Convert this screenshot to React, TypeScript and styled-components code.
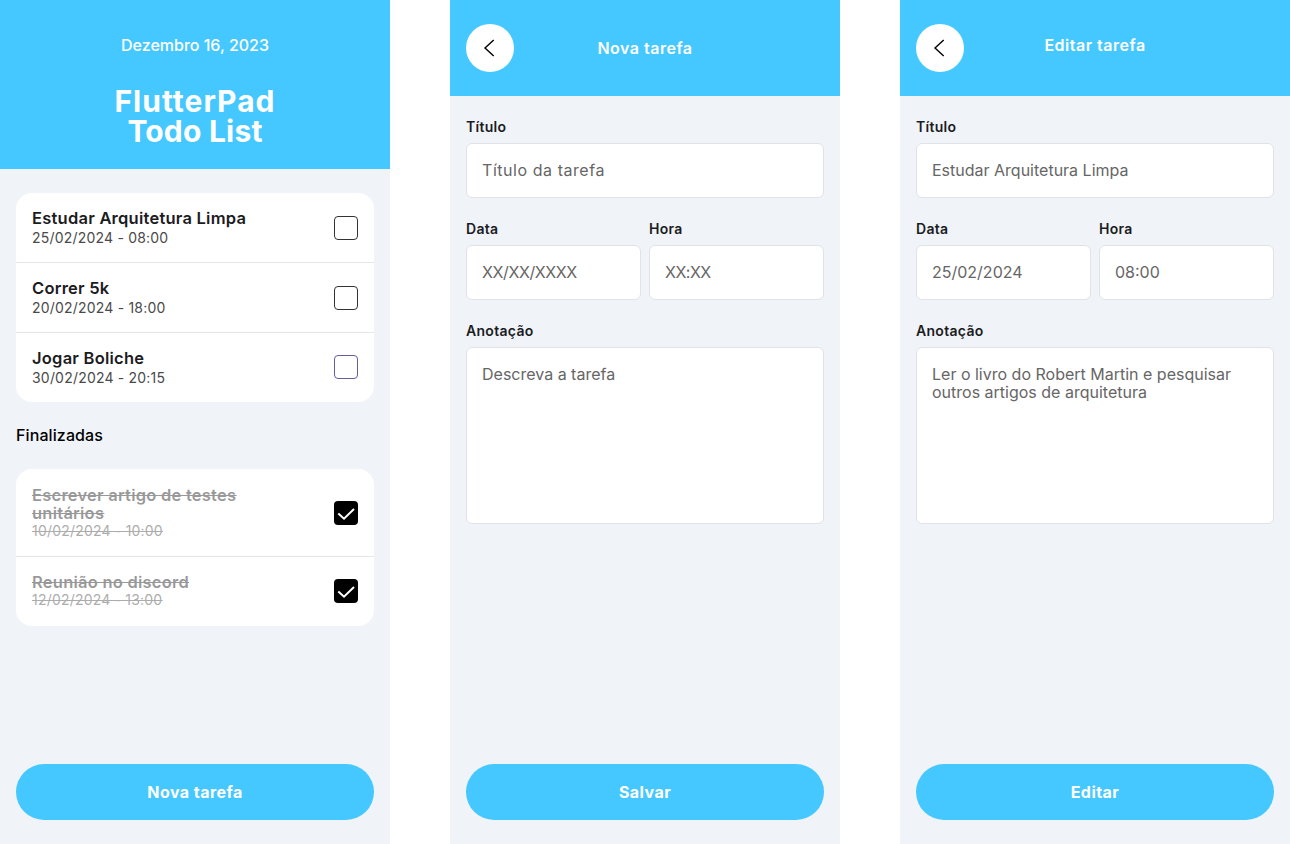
import React from 'react';
import styled, { createGlobalStyle } from 'styled-components';

const GlobalStyle = createGlobalStyle`
    html, body {
        margin: 0;
        padding: 0;
        background: #ffffff;
        font-family: "Inter", "Liberation Sans", sans-serif;
    }
    * {
        box-sizing: border-box;
    }
`;

const Page = styled.div`
    display: flex;
    gap: 60px;
    width: 1290px;
    height: 844px;
    overflow: hidden;
`;

const Screen = styled.div`
    display: flex;
    flex-direction: column;
    width: 390px;
    height: 844px;
    background: #f0f4f9;
    padding-bottom: 24px;
`;

const HomeHeader = styled.header`
    display: flex;
    flex-direction: column;
    align-items: center;
    height: 169px;
    padding-top: 36px;
    background: #45c8ff;
    color: #ffffff;
`;

const DateText = styled.div`
    font-size: 16px;
    line-height: 18px;
    font-weight: 500;
`;

const AppTitle = styled.h1`
    margin: 32px 0 0;
    font-size: 30px;
    line-height: 30px;
    font-weight: 700;
    text-align: center;
`;

const TitleLine = styled.span<{ $spacing: string }>`
    display: block;
    height: 30px;
    letter-spacing: ${(p) => p.$spacing};
`;

const FormHeader = styled.header`
    position: relative;
    display: flex;
    align-items: center;
    justify-content: center;
    height: 96px;
    background: #45c8ff;
`;

const BackButton = styled.button`
    position: absolute;
    left: 16px;
    top: 24px;
    display: flex;
    align-items: center;
    justify-content: center;
    width: 48px;
    height: 48px;
    padding: 0;
    border: none;
    border-radius: 50%;
    background: #ffffff;
`;

const HeaderTitle = styled.h2<{ $raise?: boolean }>`
    margin: ${(p) => (p.$raise ? '0 0 6px' : '0')};
    font-size: 16px;
    line-height: 20px;
    font-weight: 600;
    letter-spacing: 0.5px;
    color: #ffffff;
`;

const Content = styled.div`
    display: flex;
    flex-direction: column;
    flex: 1;
    padding: 24px 16px 0;
`;

const Card = styled.div`
    display: flex;
    flex-direction: column;
    background: #ffffff;
    border-radius: 16px;
`;

const Row = styled.div<{ $tall?: boolean }>`
    display: flex;
    align-items: center;
    justify-content: space-between;
    height: ${(p) => (p.$tall ? '88px' : '70px')};
    padding: 0 16px;
    border-bottom: 1px solid #e6e6ef;

    &:last-child {
        height: 69px;
        padding-bottom: 1px;
        border-bottom: none;
    }
`;

const RowText = styled.div<{ $done?: boolean }>`
    display: flex;
    flex-direction: column;
    gap: ${(p) => (p.$done ? '0' : '2px')};
    width: 240px;
    padding-top: ${(p) => (p.$done ? '0' : '1px')};
    text-decoration: ${(p) => (p.$done ? 'line-through' : 'none')};
    opacity: ${(p) => (p.$done ? 0.45 : 1)};
`;

const RowTitle = styled.div`
    font-size: 16.5px;
    line-height: 18px;
    font-weight: 600;
    letter-spacing: 0.24px;
    color: #1c1c1e;
    text-decoration: inherit;
`;

const RowDate = styled.div`
    font-size: 14px;
    line-height: 18px;
    font-weight: 400;
    letter-spacing: 0.2px;
    color: #4a4a4a;
    text-decoration: inherit;
`;

const Box = styled.div<{ $checked?: boolean; $tint?: string }>`
    display: flex;
    align-items: center;
    justify-content: center;
    width: 24px;
    height: 24px;
    border-radius: 4px;
    border: ${(p) => (p.$checked ? 'none' : `1px solid ${p.$tint || '#333333'}`)};
    background: ${(p) => (p.$checked ? '#000000' : '#ffffff')};
`;

const SectionTitle = styled.h3`
    margin: 24px 0 25px;
    font-size: 16px;
    line-height: 18px;
    font-weight: 500;
    letter-spacing: 0.1px;
    color: #000000;
`;

const BigButton = styled.button`
    width: 358px;
    height: 56px;
    margin: auto 16px 0;
    border: none;
    border-radius: 28px;
    background: #45c8ff;
    color: #ffffff;
    font-family: inherit;
    font-size: 16px;
    font-weight: 700;
    letter-spacing: 0.45px;
`;

const Form = styled.div`
    display: flex;
    flex-direction: column;
    gap: 22px;
    padding: 22px 16px 0;
`;

const Field = styled.label`
    display: flex;
    flex-direction: column;
    flex: 1;
    min-width: 0;
    gap: 7px;
`;

const FieldLabel = styled.span`
    font-size: 14px;
    line-height: 18px;
    font-weight: 600;
    letter-spacing: 0.3px;
    color: #1c1c1e;
`;

const TwoCols = styled.div`
    display: flex;
    gap: 8px;
`;

const TextInput = styled.input<{ $hintSpacing?: string }>`
    width: 100%;
    height: 55px;
    padding: 0 15px 2px;
    border: 1px solid #e0e2e6;
    border-radius: 6px;
    background: #ffffff;
    font-family: inherit;
    font-size: 16px;
    color: #666666;

    &::placeholder {
        color: #666666;
        opacity: 1;
        letter-spacing: ${(p) => p.$hintSpacing || '0'};
    }
`;

const NoteInput = styled.textarea`
    display: block;
    width: 100%;
    height: 177px;
    padding: 17px 15px;
    border: 1px solid #e0e2e6;
    border-radius: 6px;
    background: #ffffff;
    font-family: inherit;
    font-size: 16px;
    line-height: 18px;
    color: #666666;
    resize: none;

    &::placeholder {
        color: #666666;
        opacity: 1;
    }
`;

const BackIcon = () => (
    <svg width="24" height="24" viewBox="0 0 24 24" fill="none">
        <path d="M15.7 4 L7 12 L15.7 20" stroke="#000000" strokeWidth="1.4" />
    </svg>
);

const CheckIcon = () => (
    <svg width="24" height="24" viewBox="0 0 24 24" fill="none">
        <path d="M4.3 12.4 L10 17.7 L20 8" stroke="#ffffff" strokeWidth="2" />
    </svg>
);

type Task = { title: string; date: string; tint?: string; tall?: boolean };

const openTasks: Task[] = [
    { title: 'Estudar Arquitetura Limpa', date: '25/02/2024 - 08:00' },
    { title: 'Correr 5k', date: '20/02/2024 - 18:00' },
    { title: 'Jogar Boliche', date: '30/02/2024 - 20:15', tint: '#6a5a9e' },
];

const doneTasks: Task[] = [
    { title: 'Escrever artigo de testes unitários', date: '10/02/2024 - 10:00', tall: true },
    { title: 'Reunião no discord', date: '12/02/2024 - 13:00' },
];

const TaskForm = ({ title, raise, button, values }: {
    title: string;
    raise?: boolean;
    button: string;
    values?: { title: string; date: string; time: string; note: string };
}) => (
    <Screen>
        <FormHeader>
            <BackButton><BackIcon /></BackButton>
            <HeaderTitle $raise={raise}>{title}</HeaderTitle>
        </FormHeader>
        <Form>
            <Field>
                <FieldLabel>Título</FieldLabel>
                <TextInput placeholder="Título da tarefa" $hintSpacing="0.55px" defaultValue={values?.title} />
            </Field>
            <TwoCols>
                <Field>
                    <FieldLabel>Data</FieldLabel>
                    <TextInput placeholder="XX/XX/XXXX" $hintSpacing="-0.4px" defaultValue={values?.date} />
                </Field>
                <Field>
                    <FieldLabel>Hora</FieldLabel>
                    <TextInput placeholder="XX:XX" $hintSpacing="-0.5px" defaultValue={values?.time} />
                </Field>
            </TwoCols>
            <Field>
                <FieldLabel>Anotação</FieldLabel>
                <NoteInput placeholder="Descreva a tarefa" defaultValue={values?.note} />
            </Field>
        </Form>
        <BigButton>{button}</BigButton>
    </Screen>
);

const App = () => {
    return (
        <Page>
            <GlobalStyle />
            <Screen>
                <HomeHeader>
                    <DateText>Dezembro 16, 2023</DateText>
                    <AppTitle>
                        <TitleLine $spacing="1px">FlutterPad</TitleLine>
                        <TitleLine $spacing="0.2px">Todo List</TitleLine>
                    </AppTitle>
                </HomeHeader>
                <Content>
                    <Card>
                        {openTasks.map((t) => (
                            <Row key={t.title}>
                                <RowText>
                                    <RowTitle>{t.title}</RowTitle>
                                    <RowDate>{t.date}</RowDate>
                                </RowText>
                                <Box $tint={t.tint} />
                            </Row>
                        ))}
                    </Card>
                    <SectionTitle>Finalizadas</SectionTitle>
                    <Card>
                        {doneTasks.map((t) => (
                            <Row key={t.title} $tall={t.tall}>
                                <RowText $done>
                                    <RowTitle>{t.title}</RowTitle>
                                    <RowDate>{t.date}</RowDate>
                                </RowText>
                                <Box $checked><CheckIcon /></Box>
                            </Row>
                        ))}
                    </Card>
                </Content>
                <BigButton>Nova tarefa</BigButton>
            </Screen>
            <TaskForm title="Nova tarefa" button="Salvar" />
            <TaskForm
                title="Editar tarefa"
                raise
                button="Editar"
                values={{
                    title: 'Estudar Arquitetura Limpa',
                    date: '25/02/2024',
                    time: '08:00',
                    note: 'Ler o livro do Robert Martin e pesquisar outros artigos de arquitetura',
                }}
            />
        </Page>
    );
};

export default App;
